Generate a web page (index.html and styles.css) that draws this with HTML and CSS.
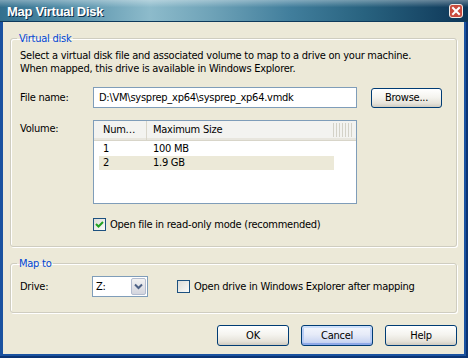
FILE: index.html
```html
<!DOCTYPE html>
<html>
 <head>
  <title>Map Virtual Disk</title>
  <link rel="stylesheet" href="styles.css">
 </head>
<body>
<div class="window">
 <div class="titlebar">
  <span class="title">Map Virtual Disk</span>
  <span class="close"><svg width="14" height="14" viewBox="0 0 14 14"><rect x="0.5" y="0.5" width="13" height="13" rx="2.5" fill="#c94a3c" stroke="#f4ece8"/><path d="M4 4 L10 10 M10 4 L4 10" stroke="#fff" stroke-width="2" stroke-linecap="square"/></svg></span>
 </div>
 <div class="client">
  <fieldset class="group vdisk">
   <legend>Virtual disk</legend>
   <p class="intro">Select a virtual disk file and associated volume to map to a drive on your machine.<br>When mapped, this drive is available in Windows Explorer.</p>
   <div class="row file">
    <label class="lbl">File name:</label>
    <div class="edit">D:\VM\sysprep_xp64\sysprep_xp64.vmdk</div>
    <button class="btn browse">Browse...</button>
   </div>
   <div class="row volume">
    <label class="lbl top">Volume:</label>
    <div class="list">
     <div class="header"><span class="hcol num">Num…</span><span class="hcol size">Maximum Size</span><span class="hfill"></span></div>
     <div class="item"><span class="c1">1</span><span>100 MB</span></div>
     <div class="item sel"><span class="c1">2</span><span>1.9 GB</span></div>
    </div>
   </div>
   <div class="check readonly">
    <span class="box"><svg width="11" height="11" viewBox="0 0 11 11"><path d="M2 5 L4.5 7.5 L9 3" fill="none" stroke="#21a121" stroke-width="2"/></svg></span>
    <span>Open file in read-only mode (recommended)</span>
   </div>
  </fieldset>
  <fieldset class="group mapto">
   <legend>Map to</legend>
   <div class="row drive">
    <label class="lbl">Drive:</label>
    <div class="combo"><span class="val">Z:</span><span class="drop"><svg width="9" height="7" viewBox="0 0 9 7"><path d="M1 1.5 L4.5 5 L8 1.5" fill="none" stroke="#4d6185" stroke-width="2"/></svg></span></div>
    <div class="check explorer">
     <span class="box"></span>
     <span>Open drive in Windows Explorer after mapping</span>
    </div>
   </div>
  </fieldset>
  <div class="buttons">
   <button class="btn">OK</button>
   <button class="btn default">Cancel</button>
   <button class="btn">Help</button>
  </div>
 </div>
</div>
</body>
</html>
```

FILE: styles.css
```css
BODY {
 margin: 0;
 font: 11px "DejaVu Sans Condensed", "Liberation Sans", sans-serif;
 letter-spacing: -0.25px;
 color: #000;
}
.window {
 width: 468px;
 height: 358px;
 display: flex;
 flex-direction: column;
 background: #1a52a0;
 box-shadow: inset -2px -2px 0 #0b3473;
}

/* caption */
.titlebar {
 height: 22px;
 flex: none;
 display: flex;
 align-items: center;
 justify-content: space-between;
 padding: 0 5px 0 7px;
 box-sizing: border-box;
 border-bottom: 1px solid #0e3a5c;
 background:
  linear-gradient(rgba(255,255,255,.35), rgba(255,255,255,0) 35%),
  linear-gradient(90deg, #33708e 0%, #4d89a4 12%, #8dbbcb 32%, #6fa3b8 45%, #417e9c 62%, #28627f 78%, #0d3657 100%);
}
.title {
 font: bold 13px "Liberation Sans", sans-serif;
 letter-spacing: -0.3px;
 color: #fff;
 padding-top: 2px;
 text-shadow: 1px 1px 0 #10304a;
}
.close {
 display: flex;
}

/* dialog body */
.client {
 flex: 1;
 margin: 0 4px 4px 3px;
 padding: 0 7px;
 background: #ece9d8;
 display: flex;
 flex-direction: column;
}
.group {
 margin: 0;
 padding: 0 9px 15px 9px;
 border: 1px solid #cfcdc0;
 border-radius: 3px;
 box-shadow: inset 1px 1px 0 #fff, 1px 1px 0 #fff;
 min-width: 0;
}
.group LEGEND {
 padding: 0 2px;
 margin-left: -3px;
 line-height: 13px;
 color: #0046d5;
}
.vdisk { margin-top: 10px; }
.mapto { margin-top: 10px; }

.intro {
 margin: 4px 0 0;
 line-height: 13px;
}
.row {
 display: flex;
 align-items: center;
}
.lbl {
 width: 73px;
 flex: none;
}
.lbl.top {
 align-self: flex-start;
 padding-top: 2px;
}
.file { margin-top: 12px; }
.volume { margin-top: 12px; align-items: flex-start; }
.drive { margin-top: 6px; }

.edit {
 width: 264px;
 height: 21px;
 box-sizing: border-box;
 border: 1px solid #7f9db9;
 background: #fff;
 padding-left: 5px;
 line-height: 19px;
 white-space: nowrap;
}

/* list view */
.list {
 width: 264px;
 height: 84px;
 box-sizing: border-box;
 border: 1px solid #7f9db9;
 background: #fff;
}
.header {
 display: flex;
 height: 19px;
 line-height: 18px;
 background: #f3f3f0;
 border-bottom: 1px solid #d8d5c9;
 box-shadow: inset 0 -2px 0 #e8e6de;
}
.hcol {
 box-sizing: border-box;
 white-space: nowrap;
}
.hcol.num {
 width: 53px;
 padding-left: 9px;
 border-right: 1px solid #d9d6cb;
}
.hcol.size {
 width: 186px;
 padding-left: 6px;
}
.hfill {
 flex: 1;
 background: repeating-linear-gradient(90deg, #d4d2c8 0 1px, transparent 1px 3px);
 margin: 2px 4px 3px 0;
}
.item {
 display: flex;
 height: 14px;
 line-height: 14px;
 margin-left: 5px;
 width: 235px;
}
.header + .item { margin-top: 1px; }
.item.sel { background: #ece9d8; }
.c1 {
 width: 54px;
 padding-left: 4px;
 box-sizing: border-box;
}

/* check boxes */
.check {
 display: flex;
 align-items: center;
}
.box {
 width: 13px;
 height: 13px;
 box-sizing: border-box;
 border: 1px solid #1c5180;
 background: linear-gradient(135deg, #dcdcd7, #fbfbf9);
 display: flex;
 align-items: center;
 justify-content: center;
 margin-right: 4px;
}
.readonly {
 margin-top: 14px;
 margin-left: 73px;
}
.explorer { margin-left: 29px; }

/* combo */
.combo {
 width: 56px;
 height: 21px;
 box-sizing: border-box;
 margin-left: -1px;
 border: 1px solid #7f9db9;
 background: #fff;
 display: flex;
 align-items: center;
}
.val {
 flex: 1;
 padding-left: 3px;
}
.drop {
 width: 15px;
 height: 17px;
 margin-right: 1px;
 box-sizing: border-box;
 border: 1px solid #b3bccf;
 border-radius: 2px;
 background: linear-gradient(#f2f2f2, #d3d5de);
 display: flex;
 align-items: center;
 justify-content: center;
}

/* push buttons */
.btn {
 width: 72px;
 height: 21px;
 padding: 0;
 font: inherit;
 letter-spacing: inherit;
 color: #000;
 border: 1px solid #003c74;
 border-radius: 3px;
 background: linear-gradient(#fff 0%, #f5f4ef 45%, #e6e3da 80%, #cfcbc0 100%);
}
.browse {
 width: 71px;
 height: 20px;
 margin-left: 14px;
}
.btn.default {
 background: linear-gradient(#f3f6fd 0%, #e6ebf8 45%, #cdd8f3 80%, #b7c6ee 100%);
 box-shadow: inset 0 2px 0 #cee0fb, inset 0 -2px 0 #8fa9e8, inset 2px 0 0 #b9cdf5, inset -2px 0 0 #b9cdf5;
}
.buttons {
 margin-top: 12px;
 display: flex;
 justify-content: flex-end;
 gap: 12px;
}
```
